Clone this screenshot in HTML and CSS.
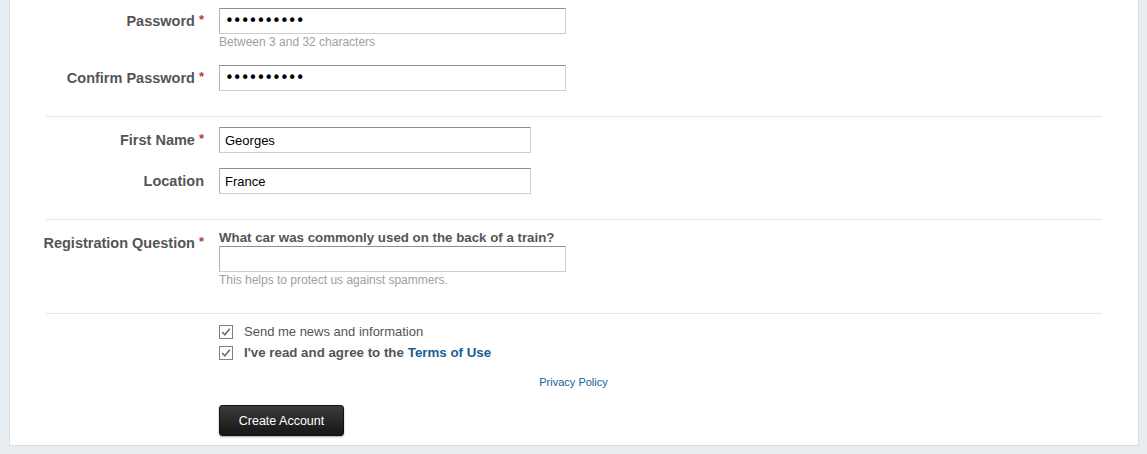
FILE: index.html
```html
<!DOCTYPE html>
<html>

<head>
    <title>Sign Up</title>
    <link rel="stylesheet" href="styles.css">
</head>

<body>
    <form class="panel">
        <div class="section first">
            <div class="row">
                <label class="label" for="password">Password <span class="req">*</span></label>
                <div class="field">
                    <input type="password" id="password" class="input wide pass" value="georges123">
                    <p class="hint">Between 3 and 32 characters</p>
                </div>
            </div>
            <div class="row second">
                <label class="label" for="confirm">Confirm Password <span class="req">*</span></label>
                <div class="field">
                    <input type="password" id="confirm" class="input wide pass" value="georges123">
                </div>
            </div>
        </div>

        <div class="section names">
            <div class="row">
                <label class="label" for="first-name">First Name <span class="req">*</span></label>
                <div class="field">
                    <input type="text" id="first-name" class="input" value="Georges">
                </div>
            </div>
            <div class="row second">
                <label class="label" for="location">Location</label>
                <div class="field">
                    <input type="text" id="location" class="input" value="France">
                </div>
            </div>
        </div>

        <div class="section question">
            <div class="row">
                <label class="label" for="answer">Registration Question <span class="req">*</span></label>
                <div class="field">
                    <p class="ask">What car was commonly used on the back of a train?</p>
                    <input type="text" id="answer" class="input wide">
                    <p class="hint">This helps to protect us against spammers.</p>
                </div>
            </div>
        </div>

        <div class="section options">
            <label class="check">
                <span class="box">
                    <svg width="14" height="14" viewBox="0 0 14 14">
                        <rect x="0.5" y="0.5" width="13" height="13" fill="#fff" stroke="#7f7f7f" />
                        <path d="M3.2 7 L5.8 9.8 L10.8 3.8" fill="none" stroke="#6a6a6a" stroke-width="1.5" />
                    </svg>
                </span>
                Send me news and information
            </label>
            <label class="check agree">
                <span class="box">
                    <svg width="14" height="14" viewBox="0 0 14 14">
                        <rect x="0.5" y="0.5" width="13" height="13" fill="#fff" stroke="#7f7f7f" />
                        <path d="M3.2 7 L5.8 9.8 L10.8 3.8" fill="none" stroke="#6a6a6a" stroke-width="1.5" />
                    </svg>
                </span>
                I've read and agree to the <a href="#">Terms of Use</a>
            </label>
            <p class="privacy"><a href="#">Privacy Policy</a></p>
            <button type="button" class="submit">Create Account</button>
        </div>
    </form>
</body>

</html>
```

FILE: styles.css
```css
body {
    margin: 0;
    background-color: #e8edf1;
    font-family: "Liberation Sans", Arial, sans-serif;
    color: #555;
}

p {
    margin: 0;
}

a {
    color: #176093;
    text-decoration: none;
}

.panel {
    margin: 0 8px 8px 9px;
    padding: 0 36px 9px 36px;
    background-color: #fff;
    border: 1px solid #d6dee5;
    border-top: none;
}

.section {
    border-top: 1px solid #e6e6e6;
    padding-bottom: 25px;
}

.section.first {
    border-top: none;
    padding-top: 8px;
}

.section.names {
    padding-top: 10px;
}

.section.question {
    padding-top: 9px;
}

.section.options {
    padding: 7px 0 0 173px;
}

.row {
    display: grid;
    grid-template-columns: 158px 1fr;
    column-gap: 15px;
    align-items: start;
}

.row.second {
    margin-top: 15px;
}

.label {
    display: flex;
    justify-content: flex-end;
    align-items: center;
    gap: 4px;
    height: 26px;
    white-space: nowrap;
    font-size: 14.5px;
    font-weight: bold;
    color: #555;
}

.section.question .label {
    margin-top: 1px;
}

.req {
    color: #c4323c;
    font-size: 13px;
    margin-top: -3px;
}

.input {
    display: block;
    box-sizing: border-box;
    width: 312px;
    height: 26px;
    margin: 0;
    padding: 0 5px;
    border: 1px solid #cfcfcf;
    border-top-color: #8f8f8f;
    border-left-color: #b5b5b5;
    font-family: "Liberation Sans", Arial, sans-serif;
    font-size: 13px;
    color: #000;
    background: #fff;
}

.input.wide {
    width: 347px;
}

.input.pass {
    font-family: "DejaVu Sans", sans-serif;
    font-size: 15px;
    letter-spacing: -1px;
}

.input:focus {
    outline: none;
}

.hint {
    margin-top: 1px;
    font-size: 12px;
    line-height: 15px;
    color: #a0a0a0;
}

.ask {
    font-size: 13.3px;
    font-weight: bold;
    line-height: 17px;
    color: #555;
}

.check {
    display: flex;
    align-items: center;
    height: 21px;
    font-size: 13px;
    color: #555;
}

.check.agree {
    font-size: 13.3px;
    font-weight: bold;
}

.check a {
    margin-left: 4px;
}

.box {
    display: flex;
    width: 14px;
    height: 14px;
    margin-right: 11px;
}

.privacy {
    width: 709px;
    margin-top: 12px;
    text-align: center;
    font-size: 11px;
    line-height: 14px;
}

.submit {
    display: block;
    width: 125px;
    height: 31px;
    margin-top: 16px;
    border: 1px solid #111;
    border-radius: 3px;
    background: linear-gradient(#3b3b3b, #161616);
    box-shadow: 0 1px 2px rgba(0, 0, 0, 0.35);
    color: #fff;
    font-family: "Liberation Sans", Arial, sans-serif;
    font-size: 12.5px;
    cursor: pointer;
}
```
